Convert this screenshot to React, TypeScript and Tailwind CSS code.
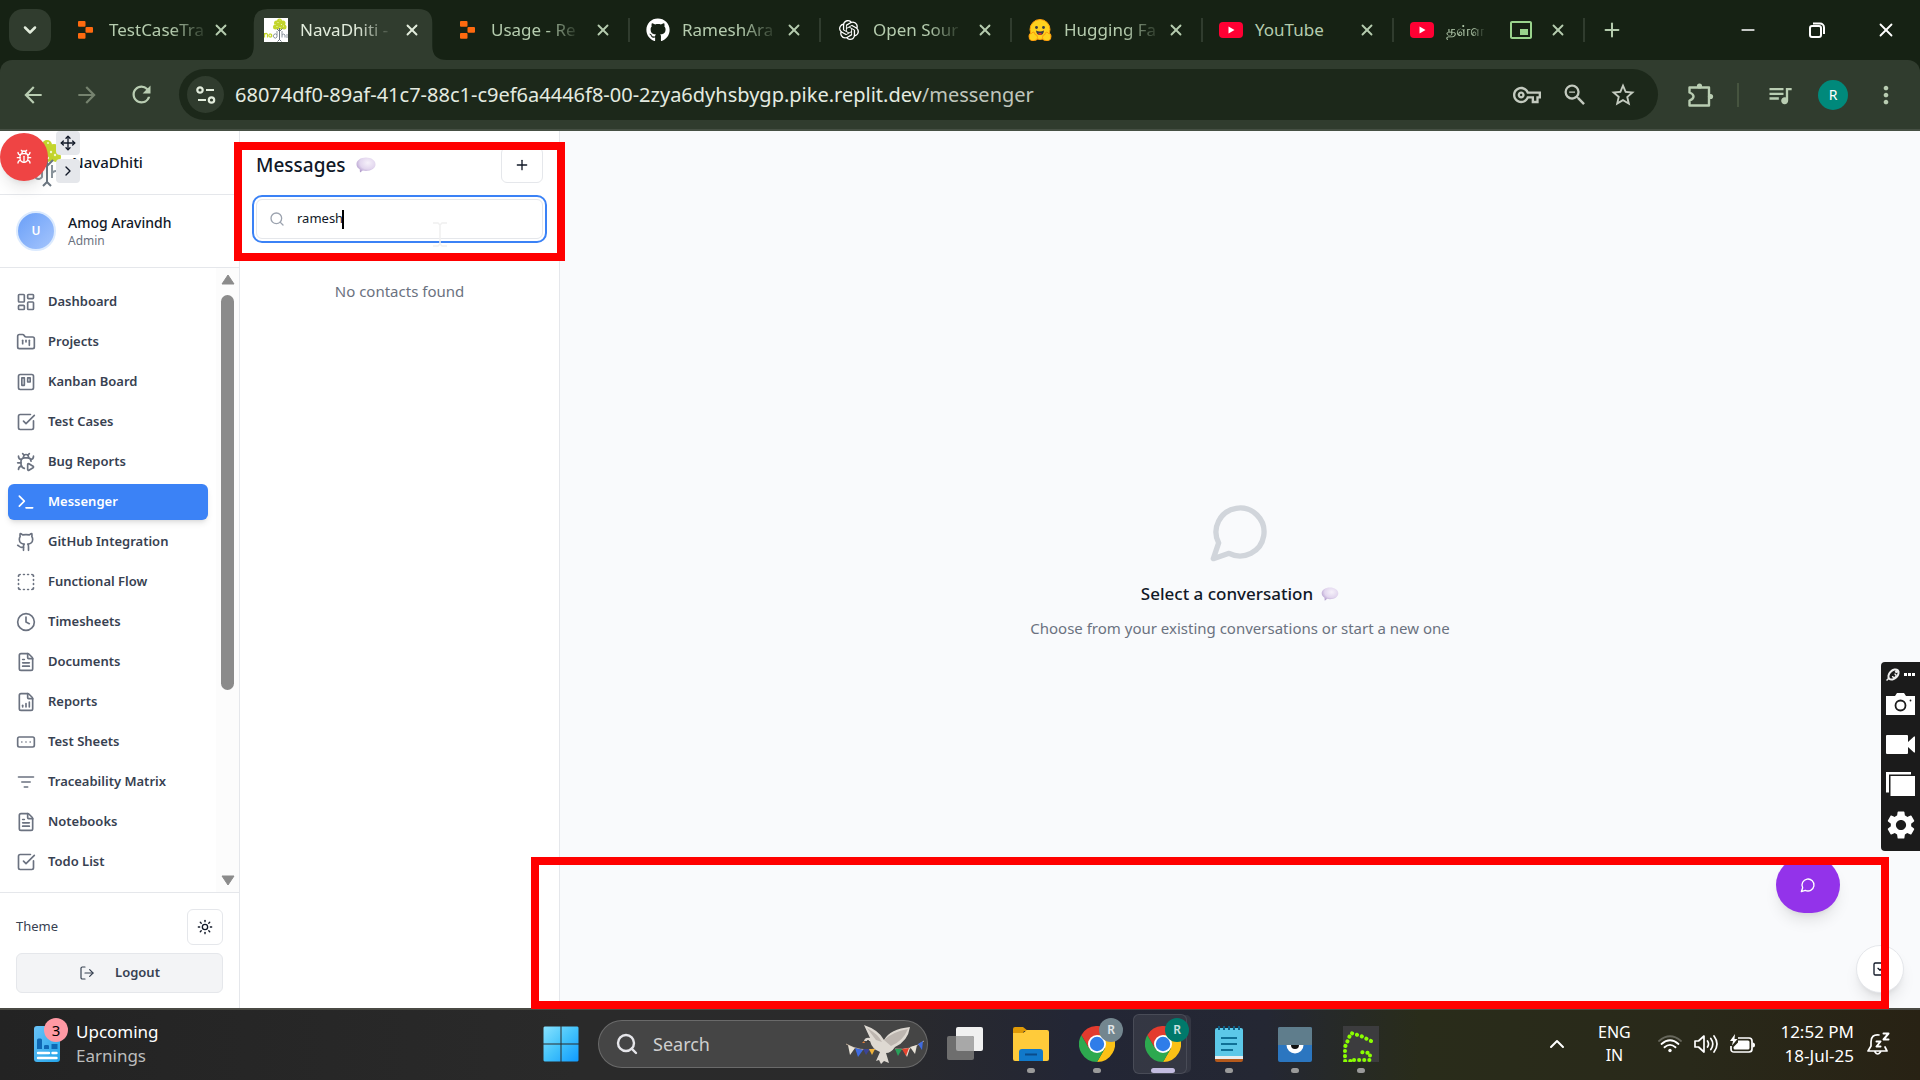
import React from "react";
import {
  Bug, BugPlay, ChevronDown, ChevronRight, ChevronUp, Clock, FileChartColumnIncreasing, FileText, FolderKanban,
  LayoutDashboard, LogOut, Minus, Move, Plus, RectangleEllipsis, Search, SquareCheckBig, SquareDashed, Sun, Terminal, X,
} from "lucide-react";
import {
  MdArrowBack, MdArrowForward, MdMoreVert, MdOutlineVpnKey, MdPictureInPictureAlt,
  MdQueueMusic, MdRefresh, MdSettings, MdStarBorder, MdZoomOut,
} from "react-icons/md";
import { FaGithub } from "react-icons/fa";
import { SiOpenai } from "react-icons/si";

type IconProps = { className?: string };

const Stroke = ({ className, children }: IconProps & { children: React.ReactNode }) => (
  <svg viewBox="0 0 24 24" fill="none" stroke="currentColor" strokeWidth="2" strokeLinecap="round" strokeLinejoin="round" className={className} aria-hidden="true">
    {children}
  </svg>
);

const KanbanIcon = ({ className }: IconProps) => (
  <Stroke className={className}>
    <rect width="18" height="18" x="3" y="3" rx="2" />
    <rect width="3" height="9" x="7" y="7" />
    <rect width="3" height="5" x="14" y="7" />
  </Stroke>
);

const FilterIcon = ({ className }: IconProps) => (
  <Stroke className={className}>
    <path d="M3 6h18M7 12h10M10 18h4" />
  </Stroke>
);

const GithubOutline = ({ className }: IconProps) => (
  <Stroke className={className}>
    <path d="M15 22v-4a4.8 4.8 0 0 0-1-3.5c3 0 6-2 6-5.5.08-1.25-.27-2.48-1-3.5.28-1.15.28-2.35 0-3.5 0 0-1 0-3 1.5-2.64-.5-5.36-.5-8 0C6 2 5 2 5 2c-.3 1.15-.3 2.35 0 3.5A5.403 5.403 0 0 0 4 9c0 3.5 3 5.5 6 5.5-.39.49-.68 1.05-.85 1.65-.17.6-.22 1.23-.15 1.85v4" />
    <path d="M9 18c-4.51 2-5-2-7-2" />
  </Stroke>
);

const ChatBubble = ({ className }: IconProps) => (
  <Stroke className={className}>
    <path d="M7.9 20A9 9 0 1 0 4 16.1L2 22Z" />
  </Stroke>
);

const PuzzleIcon = ({ className }: IconProps) => (
  <svg viewBox="0 0 28 28" className={className} fill="none" stroke="currentColor" strokeWidth="2.4" strokeLinejoin="round" aria-hidden="true">
    <path d="M3.500 6.500H23V24.500H3.500V19.500Q7.500 18 7.500 15.500T3.500 11.500Z" />
    <path d="M11 6a2.500 2.500 0 0 1 5 0ZM23.500 13a2.500 2.500 0 0 1 0 5Z" fill="currentColor" stroke="none" />
    <circle cx="13.500" cy="5" r="2.600" fill="currentColor" stroke="none" />
    <circle cx="24.500" cy="15.500" r="2.600" fill="currentColor" stroke="none" />
  </svg>
);

const BubbleEmoji = ({ className }: IconProps) => (
  <svg viewBox="0 0 20 16" className={className} role="img" aria-label="speech balloon">
    <defs>
      <radialGradient id="bubble" cx="0.6" cy="0.35" r="0.7">
        <stop offset="0" stopColor="#f6f1fa" />
        <stop offset="0.6" stopColor="#e2d6ee" />
        <stop offset="1" stopColor="#b09acb" />
      </radialGradient>
    </defs>
    <path d="M10 0.5c5.4 0 9.5 2.9 9.5 6.7s-4.100 6.700-9.500 6.700c-1.200 0-2.200-.1-3.200-.4L4 15.600l-.3-3.300C1.700 11.100.5 9.300.5 7.200.5 3.400 4.600.5 10 .5Z" fill="url(#bubble)" />
  </svg>
);

const ReplitIcon = () => (
  <svg viewBox="0 0 15 18" className="h-[18px] w-[15px]" aria-hidden="true">
    <g fill="#ff6a0f">
      <rect width="7.500" height="5.800" rx="1" />
      <rect x="7.500" y="6" width="7.500" height="5.800" rx="1" />
      <rect y="12" width="7.500" height="5.800" rx="1" />
    </g>
  </svg>
);

const TreeLogo = ({ className, background }: IconProps & { background?: string }) => (
  <svg viewBox="0 0 48 48" className={className} aria-hidden="true">
    {background && <rect width="48" height="48" fill={background} />}
    <g fill="#c3d52c">
      <circle cx="31" cy="6" r="5" />
      <circle cx="25" cy="10" r="5" />
      <circle cx="38" cy="10" r="5" />
      <circle cx="23" cy="18" r="5" />
      <circle cx="31" cy="15" r="8" />
      <circle cx="40" cy="18" r="5" />
    </g>
    <g fill="#f4f8cc">
      <circle cx="28" cy="9" r="1.200" />
      <circle cx="35" cy="13" r="1.200" />
      <circle cx="26" cy="17" r="1.200" />
      <circle cx="32" cy="4" r="1" />
      <circle cx="22" cy="13" r="1" />
      <circle cx="39" cy="16" r="1.200" />
      <circle cx="32" cy="19" r="1.200" />
    </g>
    <path d="M31 20v24M31 27l-5-5M31 27l6-6M31 43l-4 4M31 43l4 4" stroke="#6b7680" strokeWidth="2" fill="none" />
    <path d="M1 30v9m0-6q4-5 6 0v6m8-6a3 3 0 1 0 0 4v-5" stroke="#c3d52c" strokeWidth="2.500" fill="none" />
    <path d="M26 34a4 4 0 1 0 0 4V26M36 26v13m0-5q4-4 6 0v5M46 32v8" stroke="#8a949c" strokeWidth="2" fill="none" />
  </svg>
);

const YoutubeIcon = () => (
  <svg viewBox="0 0 24 16" className="h-4 w-6" aria-hidden="true">
    <rect width="24" height="16" rx="4" fill="#ff0033" />
    <path d="M9.500 4.500v7l6-3.500Z" fill="#fff" />
  </svg>
);

const HuggingIcon = () => (
  <svg viewBox="0 0 24 22" className="h-[22px] w-6" aria-hidden="true">
    <circle cx="12" cy="10.500" r="10" fill="#ffd21e" stroke="#ff9d0b" />
    <circle cx="8.500" cy="8.500" r="1.400" fill="#3a3b45" />
    <circle cx="15.500" cy="8.500" r="1.400" fill="#3a3b45" />
    <path d="M8 11.500q4 2 8 0q-.5 4.500-4 4.500t-4-4.500" fill="#3a3b45" />
    <path d="M10 15q2-2 4 0-2 1.500-4 0" fill="#f8312f" />
    <path d="M1 17q0-3 2.500-2.500L5 13q2 0 2 2.500 2.500 0 2.500 3T6.500 21.500H3.500Q.8 21 1 17M23 17q0-3-2.500-2.500L19 13q-2 0-2 2.500-2.500 0-2.500 3t3 3h3q2.700-.5 2.500-4.500" fill="#ffd21e" stroke="#ff9d0b" />
  </svg>
);

type Tab = { title: string; icon: React.ReactNode; active?: boolean; line?: boolean; pip?: boolean; fits?: boolean };

const tabs: Tab[] = [
  { title: "TestCaseTra", icon: <ReplitIcon /> },
  { title: "NavaDhiti -", icon: <TreeLogo className="size-6" background="#fff" />, active: true },
  { title: "Usage - Re", icon: <ReplitIcon />, line: true },
  { title: "RameshAra", icon: <FaGithub className="size-6 text-white" />, line: true },
  { title: "Open Sour", icon: <SiOpenai className="size-5 text-white" />, line: true },
  { title: "Hugging Fa", icon: <HuggingIcon />, line: true },
  { title: "YouTube", icon: <YoutubeIcon />, line: true, fits: true },
  { title: "தள்ள", icon: <YoutubeIcon />, line: true, pip: true },
];

const TabItem = ({ title, icon, active, line, pip, fits }: Tab) => (
  <div role="tab" aria-selected={!!active} className="relative flex w-[191px] min-w-0 shrink items-center px-1">
    {active && (
      <svg viewBox="0 0 211 51" preserveAspectRatio="none" className="absolute -left-2 bottom-0 h-[51px] w-[calc(100%+16px)]" aria-hidden="true">
        <path d="M0 51Q14 51 14 37V14Q14 0 28 0H182Q196 0 196 14V37Q196 51 211 51Z" fill="#303c2e" />
      </svg>
    )}
    <div className="relative flex w-full items-center pl-3 pr-3.5">
      <span className="flex w-6 shrink-0 justify-center">{icon}</span>
      <span
        className={`ml-3 whitespace-nowrap ${pip ? "text-base" : "text-[17px]"} ${active ? "text-[#e2ecdc]" : "text-[#b5ccae]"} ${
          fits ? "" : "[mask-image:linear-gradient(to_right,#000_65%,rgb(0_0_0/0.15))]"
        }`}
      >
        {title}
      </span>
      <span className={`ml-auto flex shrink-0 items-center gap-4 ${active ? "text-[#e2ecdc]" : "text-[#b5ccae]"}`}>
        {pip && <MdPictureInPictureAlt className="size-6 text-[#9ad48d]" />}
        <button aria-label={`Close ${title}`}>
          <X className="size-[18px]" strokeWidth={2.5} />
        </button>
      </span>
    </div>
    {line && <span className="absolute right-0 top-[18px] h-6 w-[2px] bg-[#303c2e]" />}
  </div>
);

const BrowserChrome = () => (
  <header className="shrink-0 bg-[#162214]">
    <div className="flex h-[60px] items-stretch">
      <button aria-label="Search tabs" className="my-[9px] ml-[9px] mr-1.5 flex w-[42px] shrink-0 items-center justify-center rounded-[14px] bg-[#303c2e] text-[#e2ecdc]">
        <ChevronDown className="size-5" strokeWidth={3} />
      </button>
      <div role="tablist" className="flex min-w-0">
        {tabs.map((t) => (
          <TabItem key={t.title} {...t} />
        ))}
      </div>
      <button aria-label="New tab" className="px-4 text-[#b5ccae]">
        <Plus className="size-[22px]" strokeWidth={2.2} />
      </button>
      <div className="ml-auto flex shrink-0 text-white">
        <button aria-label="Minimize" className="flex w-[69px] items-center justify-center">
          <Minus className="size-5" />
        </button>
        <button aria-label="Restore" className="flex w-[69px] items-center justify-center">
          <svg viewBox="0 0 16 16" className="size-4" fill="none" stroke="currentColor" strokeWidth="2" aria-hidden="true">
            <rect x="1" y="4" width="11" height="11" rx="2" />
            <path d="M4 1.500h7a4 4 0 0 1 4 4V12" />
          </svg>
        </button>
        <button aria-label="Close" className="flex w-[69px] items-center justify-center">
          <X className="size-[22px]" />
        </button>
      </div>
    </div>
    <div className="flex h-[71px] items-center rounded-t-xl border-b-2 border-[#465044] bg-[#303c2e] pl-5 text-[#b9cdb2]">
      <button aria-label="Back" className="mr-7">
        <MdArrowBack className="size-[26px]" />
      </button>
      <button aria-label="Forward" className="mr-7 text-[#76836f]">
        <MdArrowForward className="size-[26px]" />
      </button>
      <button aria-label="Reload" className="mr-6">
        <MdRefresh className="size-[27px]" />
      </button>
      <div className="flex h-[51px] min-w-0 grow items-center rounded-full bg-[#1c281a] pl-2 pr-[21px] text-[#c3cabf]">
        <button aria-label="View site information" className="flex size-[37px] shrink-0 items-center justify-center rounded-full bg-[#303c2e] text-[#e2ecdc]">
          <svg viewBox="0 0 20 18" className="h-[18px] w-5" fill="none" stroke="currentColor" strokeWidth="2.200" aria-hidden="true">
            <circle cx="4" cy="4" r="2.700" />
            <path d="M10 4h8M2 14h8" />
            <circle cx="15.500" cy="14" r="2.700" />
          </svg>
        </button>
        <div role="textbox" aria-label="Address and search bar" contentEditable suppressContentEditableWarning className="ml-[11px] grow truncate text-xl text-[#e4ebe0]">
          68074df0-89af-41c7-88c1-c9ef6a4446f8-00-2zya6dyhsbygp.pike.replit.dev<span className="text-[#c0c6bc]">/messenger</span>
        </div>
        <button aria-label="Passwords" className="mr-5">
          <MdOutlineVpnKey className="size-7" />
        </button>
        <button aria-label="Zoom" className="mr-5">
          <MdZoomOut className="size-7" />
        </button>
        <button aria-label="Bookmark this tab">
          <MdStarBorder className="size-7" />
        </button>
      </div>
      <button aria-label="Extensions" className="ml-7">
        <PuzzleIcon className="size-7" />
      </button>
      <span className="ml-[23px] h-6 w-[2px] bg-[#46543f]" />
      <button aria-label="Media controls" className="ml-[27px]">
        <MdQueueMusic className="size-7" />
      </button>
      <button aria-label="Profile" className="ml-6 flex size-[30px] items-center justify-center rounded-full bg-[#00897b] text-sm text-white">
        R
      </button>
      <button aria-label="Menu" className="ml-6 mr-5">
        <MdMoreVert className="size-7" />
      </button>
    </div>
  </header>
);

const nav: { label: string; Icon: React.ComponentType<IconProps>; active?: boolean }[] = [
  { label: "Dashboard", Icon: LayoutDashboard },
  { label: "Projects", Icon: FolderKanban },
  { label: "Kanban Board", Icon: KanbanIcon },
  { label: "Test Cases", Icon: SquareCheckBig },
  { label: "Bug Reports", Icon: BugPlay },
  { label: "Messenger", Icon: Terminal, active: true },
  { label: "GitHub Integration", Icon: GithubOutline },
  { label: "Functional Flow", Icon: SquareDashed },
  { label: "Timesheets", Icon: Clock },
  { label: "Documents", Icon: FileText },
  { label: "Reports", Icon: FileChartColumnIncreasing },
  { label: "Test Sheets", Icon: RectangleEllipsis },
  { label: "Traceability Matrix", Icon: FilterIcon },
  { label: "Notebooks", Icon: FileText },
  { label: "Todo List", Icon: SquareCheckBig },
];

const Sidebar = () => (
  <aside className="relative flex w-60 shrink-0 flex-col border-r border-[#e5e7eb] bg-white">
    <div className="flex h-16 shrink-0 items-center border-b border-[#e5e7eb] pl-4">
      <TreeLogo className="size-12" />
      <span className="ml-2 text-[15px] font-medium text-[#111827]">NavaDhiti</span>
    </div>
    <div className="flex h-[73px] shrink-0 items-center gap-3 border-b border-[#e5e7eb] pl-4">
      <span className="flex size-10 items-center justify-center rounded-full border-2 border-[#dbeafe] bg-linear-to-br from-[#6a9ff8] to-[#a5c5fc] text-xs font-semibold text-white">U</span>
      <div>
        <div className="text-sm font-medium leading-5 text-[#111827]">Amog Aravindh</div>
        <div className="text-xs leading-4 text-[#6b7280]">Admin</div>
      </div>
    </div>
    <div className="flex min-h-0 grow">
      <nav className="min-w-0 grow overflow-hidden px-2 pt-4">
        <ul className="space-y-1">
          {nav.map(({ label, Icon, active }) => (
            <li key={label}>
              <a
                href="#"
                aria-current={active ? "page" : undefined}
                className={`flex h-9 items-center gap-3 rounded-md px-2 text-[13px] ${active ? "bg-[#3b82f6] font-semibold text-white shadow-md" : "font-semibold text-[#374151]"}`}
              >
                <Icon className={active ? "size-5 text-white" : "size-5 text-[#6b7280]"} />
                {label}
              </a>
            </li>
          ))}
        </ul>
      </nav>
      <div aria-hidden="true" className="flex w-[23px] shrink-0 flex-col items-center bg-[#fcfcfc] py-1.5 text-[#8b8b8b]">
        <svg viewBox="0 0 14 11" className="h-[11px] w-3.5">
          <path d="M7 1 13 10H1Z" fill="currentColor" stroke="currentColor" strokeLinejoin="round" />
        </svg>
        <span className="mt-2.5 h-[395px] w-[13px] rounded-full bg-[#8b8b8b]" />
        <svg viewBox="0 0 14 11" className="mt-auto h-[11px] w-3.5">
          <path d="M7 10 13 1H1Z" fill="currentColor" stroke="currentColor" strokeLinejoin="round" />
        </svg>
      </div>
    </div>
    <div className="shrink-0 border-t border-[#e5e7eb] px-4 pb-[15px] pt-4">
      <div className="flex items-center justify-between">
        <span className="text-[13px] text-[#374151]">Theme</span>
        <button aria-label="Toggle theme" className="flex size-9 items-center justify-center rounded-md border border-[#e5e7eb] bg-white text-[#111827]">
          <Sun className="size-4" />
        </button>
      </div>
      <button className="mt-2 flex h-10 w-full items-center justify-center gap-5 rounded-md border border-[#e5e7eb] bg-[#f3f4f6] text-[13px] font-semibold text-[#374151]">
        <LogOut className="size-4" strokeWidth={1.8} />
        Logout
      </button>
    </div>
    <button aria-label="Report a bug" className="absolute left-0 top-0.5 flex size-12 items-center justify-center rounded-full bg-[#ef4444] text-white shadow-lg">
      <Bug className="size-4" />
    </button>
    <button aria-label="Move widget" className="absolute left-14 top-0 flex size-6 items-center justify-center rounded-sm bg-[#e5e7eb] text-[#111827]">
      <Move className="size-4" />
    </button>
    <button aria-label="Expand widget" className="absolute left-14 top-7 flex size-6 items-center justify-center rounded-sm bg-[#e5e7eb] text-[#111827]">
      <ChevronRight className="size-4" />
    </button>
  </aside>
);

const MessagesPanel = () => (
  <section className="relative flex w-80 shrink-0 flex-col border-r border-[#e5e7eb] bg-white px-4 pt-4">
    <div className="flex h-9 items-center">
      <h1 className="text-[19px] font-medium text-[#111827]">Messages</h1>
      <BubbleEmoji className="ml-2.5 h-4 w-5" />
      <button aria-label="New message" className="ml-auto flex h-9 w-[42px] items-center justify-center rounded-md border border-[#e5e7eb] text-[#111827]">
        <Plus className="size-4" />
      </button>
    </div>
    <label className="mt-4 flex h-10 items-center rounded-md border border-[#e5e7eb] px-3 outline-2 outline-offset-2 outline-[#3b82f6]">
      <Search className="size-4 shrink-0 text-[#9ca3af]" />
      <input type="text" aria-label="Search contacts" defaultValue="ramesh" className="ml-3 w-[45px] text-[13px] text-[#111827] outline-none" />
      <span aria-hidden="true" className="h-[19px] w-[2px] bg-black" />
    </label>
    <p className="mt-10 text-center text-[15px] leading-6 text-[#6b7280]">No contacts found</p>
    <svg viewBox="0 0 14 25" className="absolute left-[193px] top-[91px] h-[25px] w-3.5" stroke="#f0f0f0" strokeWidth="1.500" fill="none" aria-hidden="true">
      <path d="M0 1h5l2 2 2-2h5M7 2v21M0 24h5l2-2 2 2h5" />
    </svg>
    <div aria-hidden="true" className="absolute -left-1.5 top-[11px] z-10 h-[119px] w-[331px] border-8 border-[#ff0000]" />
  </section>
);

const Recorder = () => (
  <div className="absolute right-0 top-[531px] z-20 flex h-[189px] w-[39px] flex-col items-center rounded-l bg-[#1b1b1b] text-white">
    <div className="mt-1.5 flex items-center gap-1">
      <svg viewBox="0 0 14 13" className="h-[13px] w-3.5" aria-hidden="true">
        <path d="M0.500 12.500 3 10" stroke="#eee" strokeWidth="1.500" />
        <ellipse cx="7.500" cy="6.500" rx="6" ry="4" transform="rotate(-45 7.500 6.500)" fill="none" stroke="#eee" strokeWidth="2" />
        <path d="M8.500 6a1.800 1.800 0 1 1-2 2" fill="none" stroke="#eee" strokeWidth="1.500" />
        <circle cx="10.500" cy="3.500" r="1.600" fill="#eee" />
      </svg>
      <span className="flex gap-px">
        <i className="size-[3px] bg-white" />
        <i className="size-[3px] bg-white" />
        <i className="size-[3px] bg-white" />
      </span>
    </div>
    <button aria-label="Take snapshot" className="mt-3">
      <svg viewBox="0 0 29 22" className="h-[22px] w-[29px]" aria-hidden="true">
        <path d="M0 3h9l2-3h7l2 3h9v19H0Z" fill="#fff" />
        <circle cx="14.500" cy="12.500" r="5" fill="none" stroke="#1b1b1b" strokeWidth="1.800" />
        <circle cx="24.500" cy="7.500" r="0.900" fill="#1b1b1b" />
      </svg>
    </button>
    <button aria-label="Record video" className="mt-5">
      <svg viewBox="0 0 29 19" className="h-[19px] w-[29px]" aria-hidden="true">
        <path d="M0 1q0-1 1-1h20q1 0 1 1v6l6-5.500h1v16h-1L22 12v6q0 1-1 1H1q-1 0-1-1Z" fill="#fff" />
      </svg>
    </button>
    <button aria-label="Gallery" className="mt-[18px]">
      <svg viewBox="0 0 29 24" className="h-6 w-[29px]" aria-hidden="true">
        <path d="M0 0h25v2.500H3V20.500H0Z" fill="#fff" />
        <rect x="4.500" y="4" width="24.500" height="20" fill="#fff" />
      </svg>
    </button>
    <button aria-label="Recorder settings" className="mt-3">
      <MdSettings className="size-[34px]" />
    </button>
  </div>
);

const Conversation = () => (
  <main className="relative flex min-w-0 grow flex-col items-center justify-center bg-[#f9fafc]">
    <ChatBubble className="size-16 text-[#d1d5db]" />
    <h2 className="mt-4 flex items-center gap-2 text-[17px] font-medium leading-7 text-[#111827]">
      Select a conversation
      <BubbleEmoji className="h-3.5 w-[18px]" />
    </h2>
    <p className="mt-2 text-[15px] leading-6 text-[#6b7280]">Choose from your existing conversations or start a new one</p>
    <button aria-label="Open chat" className="absolute bottom-[95px] right-20 flex h-14 w-16 items-center justify-center rounded-full bg-[#9333ea] text-white shadow-lg">
      <ChatBubble className="size-4" />
    </button>
    <button aria-label="Open tasks" className="absolute bottom-[15px] right-4 flex size-12 items-center justify-center rounded-full border border-[#e5e7eb] bg-white text-[#111827] shadow-lg">
      <SquareCheckBig className="size-4" />
    </button>
    <div aria-hidden="true" className="absolute -bottom-px -left-[29px] right-[31px] z-10 h-[152px] border-8 border-[#ff0000]" />
    <Recorder />
  </main>
);

const ChromeIcon = () => (
  <svg viewBox="0 0 36 36" className="size-9" aria-hidden="true">
    <path d="M18 9h15.600A18 18 0 0 1 18 36l7.800-13.500Z" fill="#fbc116" />
    <path d="M18 36A18 18 0 0 1 2.400 9l7.800 13.500L18 27l7.800-4.500Z" fill="#2da94f" />
    <path d="M2.400 9A18 18 0 0 1 33.600 9H18l-7.800 13.500Z" fill="#e33b2e" />
    <circle cx="18" cy="18" r="9" fill="#fff" />
    <circle cx="18" cy="18" r="7.200" fill="#2f7de9" />
  </svg>
);

const Dove = () => (
  <svg viewBox="0 0 80 40" className="h-10 w-20" aria-hidden="true">
    <path d="M1 20q14 8 30 5M50 25q16 2 29-8" stroke="#b9a894" strokeWidth="1" fill="none" />
    <path d="M3 21l7 3-5 7ZM58 25l7-1-3 9Z" fill="#e8e3d8" />
    <path d="M10 24l8 2-5 7ZM73 20l5-3-1 9Z" fill="#3f6be0" />
    <path d="M18 25l7 0-4 6Z" fill="#3b4494" />
    <path d="M24 25l6 0-3 6Z" fill="#f0b23a" />
    <path d="M50 25l7 0-4 7Z" fill="#28a05a" />
    <path d="M57 25l7-1-3 8Z" fill="#e5432e" />
    <path d="M65 23l7-2-2 9Z" fill="#e8e3d8" />
    <path d="M19 17q1-4 6-3L19 1q15 5 20 15Q45 5 65 3q-2 14-15 20-4 6-9 6l3 10-5-2-3 3-2-4-3 1 4-9q-8-3-10-11Z" fill="#ded9d2" />
    <path d="M39 16Q47 8 63 5 58 17 46 22ZM22 4q11 6 15 14l-6-2Z" fill="#bdb6b0" />
    <circle cx="23" cy="17" r="1" fill="#333" />
    <path d="M19 17l-2 2 3 0Z" fill="#e07b39" />
  </svg>
);

const TaskButton = ({ label, dot, badge, selected, children }: { label: string; dot?: boolean; badge?: string; selected?: boolean; children: React.ReactNode }) => (
  <button aria-label={label} className="relative flex w-[66px] justify-center">
    {selected && <span className="absolute left-[3px] top-1 h-[60px] w-[54px] rounded-md border border-white/10 bg-white/8 shadow-[5px_0_0_-1px_rgba(255,255,255,0.08)]" />}
    <span className="relative mt-4 flex h-9 items-center">
      {children}
      {badge && <span className={`absolute -right-2 -top-2 flex size-6 items-center justify-center rounded-full text-xs font-semibold text-white/80 ${badge}`}>R</span>}
    </span>
    {dot && <span className={`absolute bottom-[5px] h-[5px] rounded-full ${selected ? "w-6 bg-[#c3bce0]" : "w-2 bg-[#9a9a9a]"}`} />}
  </button>
);

const Taskbar = () => (
  <footer className="relative flex h-18 shrink-0 border-t-2 border-[#4a4a44] bg-[linear-gradient(to_right,#232323_0%,#2a2a2a_30%,#2a2a2b_45%,#232635_56%,#242733_66%,#292c1a_74%,#29291a_88%,#282214_100%)] pb-0.5 text-white">
    <button className="ml-[34px] flex items-center text-left">
      <span className="relative mr-4">
        <svg viewBox="0 0 26 36" className="h-9 w-[26px]" aria-hidden="true">
          <defs>
            <linearGradient id="widget" x1="0" y1="0" x2="1" y2="1">
              <stop offset="0" stopColor="#69c3f8" />
              <stop offset="1" stopColor="#22a3e8" />
            </linearGradient>
          </defs>
          <rect width="26" height="36" rx="3" fill="url(#widget)" />
          <path d="M3 23V14q0-1.500 1.500-1.500h2Q8 12.500 8 14v9ZM10 23v-3q0-1 1.500-1h2q1.500 0 1.500 1v3ZM17.500 23v-5h6v5Z" fill="#0f68b4" />
          <path d="M4 27h11M18.500 27h4M4 32h18.500" stroke="#fff" strokeWidth="2.400" strokeLinecap="round" />
        </svg>
        <span className="absolute -right-2 -top-2 flex size-6 items-center justify-center rounded-full bg-[#ff99a4] text-[15px] text-black">3</span>
      </span>
      <span className="text-[17px] leading-6">
        <span className="block">Upcoming</span>
        <span className="block text-[#bdbdbd]">Earnings</span>
      </span>
    </button>
    <div className="absolute bottom-0.5 left-[528px] top-0 flex">
      <button aria-label="Start" className="flex w-[66px] items-center justify-center">
        <svg viewBox="0 0 36 36" className="size-9" aria-hidden="true">
          <defs>
            <linearGradient id="win" gradientUnits="userSpaceOnUse" x1="0" y1="0" x2="36" y2="36">
              <stop offset="0" stopColor="#8ae3ff" />
              <stop offset="0.500" stopColor="#43c3fb" />
              <stop offset="1" stopColor="#0d99ff" />
            </linearGradient>
          </defs>
          <path d="M1.500.500h16v17h-17v-16ZM18.500.500h16l1 1v16h-17ZM.500 18.500h17v17h-16l-1-1ZM18.500 18.500h17v16l-1 1h-16Z" fill="url(#win)" />
        </svg>
      </button>
      <label className="mx-1 flex h-12 w-[330px] items-center self-center rounded-full border border-white/20 bg-[#454545] pl-4">
        <Search className="size-6 text-[#e6e6ea]" strokeWidth={2.4} />
        <input type="text" placeholder="Search" className="ml-3.5 w-20 text-lg outline-none placeholder:text-[#cfcfcf]" />
        <span className="ml-auto mr-0.5">
          <Dove />
        </span>
      </label>
      <TaskButton label="Task view">
        <svg viewBox="0 0 36 34" className="h-[34px] w-9" aria-hidden="true">
          <rect x="9" width="27" height="24" rx="2" fill="#f0f0f0" />
          <rect y="9" width="27" height="24" rx="2" fill="#6e6e6e" />
          <path d="M9 9h16q2 0 2 2v13H11q-2 0-2-2Z" fill="#a8a8a8" />
        </svg>
      </TaskButton>
      <TaskButton label="File Explorer" dot>
        <svg viewBox="0 0 36 34" className="h-[34px] w-9" aria-hidden="true">
          <path d="M0 2Q0 0 2 0h8l5 4h-4L9 8H0Z" fill="#e09a06" />
          <path d="M0 6h10l4-3h20q2 0 2 2v27q0 2-2 2H2q-2 0-2-2Z" fill="#ffcb3a" />
          <path d="M6 34V25q0-3 3-3h18q3 0 3 3v9Z" fill="#1179ca" />
          <path d="M12 27.500h12" stroke="#0a4c8a" strokeWidth="2" />
        </svg>
      </TaskButton>
      <TaskButton label="Chrome" dot badge="bg-[#73868f]">
        <ChromeIcon />
      </TaskButton>
      <TaskButton label="Chrome, current window" dot badge="bg-[#00796b]" selected>
        <ChromeIcon />
      </TaskButton>
      <TaskButton label="Notepad" dot>
        <svg viewBox="0 0 28 36" className="h-9 w-7" aria-hidden="true">
          <rect y="2" width="28" height="31" rx="2" fill="#5cc8e8" />
          <rect y="30" width="28" height="3" fill="#e8eef0" />
          <path d="M0 33h28v1q0 2-2 2H2q-2 0-2-2Z" fill="#b5591b" />
          <path d="M4 0v4M9 0v4M14 0v4M19 0v4M24 0v4" stroke="#0f5f86" strokeWidth="2" />
          <path d="M6 12h16M6 18h16M6 24h12" stroke="#0f7096" strokeWidth="2" />
        </svg>
      </TaskButton>
      <TaskButton label="Screen viewer" dot>
        <svg viewBox="0 0 34 35" className="h-[35px] w-[34px]" aria-hidden="true">
          <rect width="34" height="35" rx="2" fill="#2b76c0" />
          <path d="M0 18V2q0-2 2-2h30q2 0 2 2v16Z" fill="#5f7d8c" />
          <path d="M8.500 18h17a8.500 8.500 0 0 1-17 0" fill="#fff" />
          <path d="M13 18h8a4 4 0 0 1-8 0" fill="#111" />
        </svg>
      </TaskButton>
      <TaskButton label="Greenshot" dot>
        <svg viewBox="0 0 36 36" className="size-9" aria-hidden="true">
          <rect width="36" height="36" fill="#3c3c3e" />
          <path d="M28 15 18 10 8 7 5 14 2 21v14h9M11 34h16v-7l-10-1" fill="none" stroke="#8aff00" strokeWidth="4" strokeLinecap="round" strokeDasharray="0.100 5" />
        </svg>
      </TaskButton>
    </div>
    <div className="ml-auto flex items-center pr-[30px]">
      <button aria-label="Show hidden icons" className="mr-[27px]">
        <ChevronUp className="size-6" />
      </button>
      <button className="mr-[26px] w-9 text-center text-base leading-[23px]">
        <span className="block">ENG</span>
        <span className="block">IN</span>
      </button>
      <svg viewBox="0 0 24 18" className="mr-3 h-[18px] w-6" fill="none" stroke="#fff" strokeWidth="1.800" strokeLinecap="round" role="img" aria-label="Wi-Fi">
        <path d="M1 6Q12-3.500 23 6" stroke="#67675c" />
        <path d="M3.500 9Q12 1.500 20.500 9M6.500 12.300Q12 7.500 17.500 12.300" />
        <circle cx="12" cy="15.500" r="1.700" fill="#fff" stroke="none" />
      </svg>
      <svg viewBox="0 0 24 20" className="mr-3 h-5 w-6" fill="none" stroke="#fff" strokeWidth="1.700" strokeLinejoin="round" strokeLinecap="round" role="img" aria-label="Volume">
        <path d="M1 7v6h3.500L10 18V2L4.500 7ZM13.500 7q2 3 0 6M16.800 4.500q4 5.500 0 11M20 2q6 8 0 16" />
      </svg>
      <svg viewBox="0 0 25 20" className="mr-[25px] h-5 w-[25px]" role="img" aria-label="Battery charging">
        <path d="M8 4h11q3 0 3 3v8q0 3-3 3H4q-3 0-3-3v-3" fill="none" stroke="#fff" strokeWidth="1.700" />
        <path d="M8 6.500h10q1.500 0 1.500 1.500v6q0 1.500-1.500 1.500H5q-1.500 0-1.500-1.500v-1L8 8.500ZM22.500 8.500q2.500 0 2.500 2.500t-2.500 2.500ZM5 0 0 7h3L2 11.500 7.500 5H4.500Z" fill="#fff" />
      </svg>
      <button className="mr-3 text-right text-[17px] leading-6">
        <span className="block">12:52 PM</span>
        <span className="block">18-Jul-25</span>
      </button>
      <svg viewBox="0 0 24 24" className="size-6" fill="none" stroke="#fff" strokeWidth="1.700" strokeLinejoin="round" strokeLinecap="round" role="img" aria-label="Do not disturb">
        <path d="M13 3Q5 2 5 10v4l-3 5h19l-2-4M9 20q2.500 4 5.500 0" />
        <path d="M10.500 9.500h4l-4 5h4M17.500 1.500h5l-5 6h5" strokeWidth="2" />
      </svg>
    </div>
  </footer>
);

export default function App() {
  return (
    <div className="flex h-screen flex-col overflow-hidden bg-white font-['Noto_Sans','Open_Sans',sans-serif]">
      <BrowserChrome />
      <div className="relative flex min-h-0 grow">
        <Sidebar />
        <MessagesPanel />
        <Conversation />
      </div>
      <Taskbar />
    </div>
  );
}
